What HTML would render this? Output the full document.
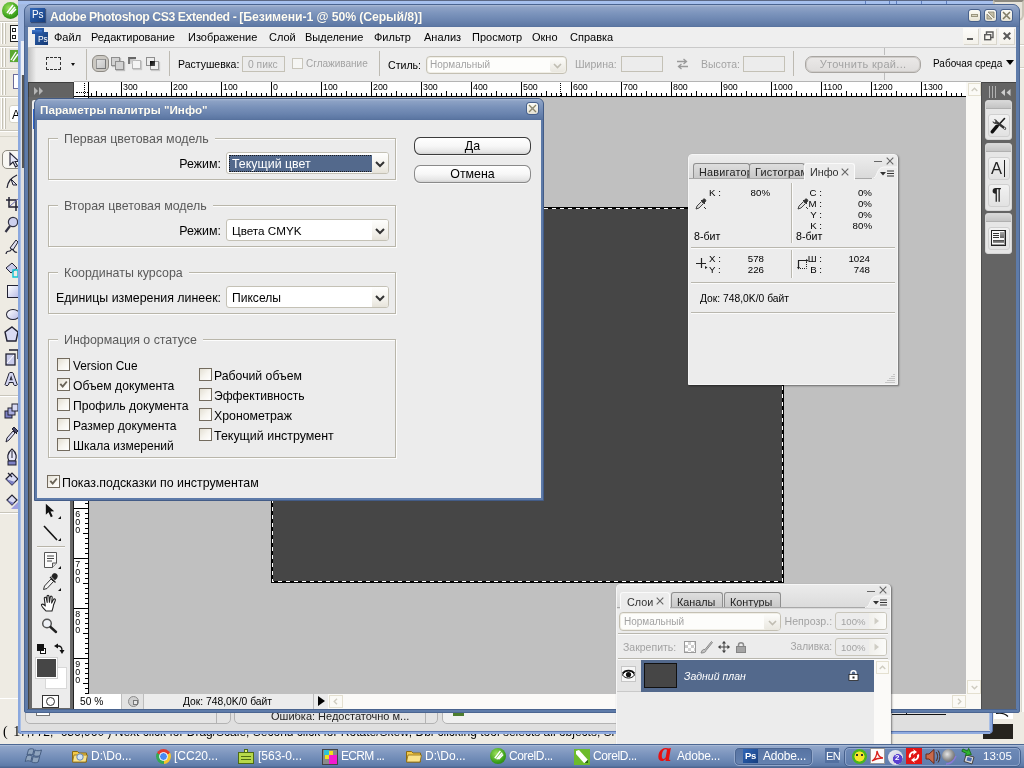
<!DOCTYPE html>
<html lang="ru">
<head>
<meta charset="utf-8">
<title>Adobe Photoshop CS3 Extended</title>
<style>
*{box-sizing:border-box;margin:0;padding:0}
html,body{width:1024px;height:768px;overflow:hidden}
body{position:relative;will-change:transform;background:#eeebe3;font-family:"Liberation Sans","DejaVu Sans",sans-serif;font-size:11px;color:#000;line-height:1}
.a{position:absolute}
.t{position:absolute;white-space:nowrap;line-height:14px;height:14px}
.g{color:#a3a3a3}
svg{position:absolute;overflow:visible}
/* fonts */
.f10{font-size:10.3px}
.f11{font-size:11px}
.fd{font-size:12.4px}
/* window */
#w0{left:17px;top:0;width:976px;height:734px;background:#dfdfdf;border:1px solid #5572ad;border-radius:5px 5px 4px 4px;box-shadow:inset 0 0 0 2px #8ba8de,inset 0 0 0 3px #a9bfe6}
#ps{left:24px;top:4px;width:996px;height:709px;background:#5e7ba9;border:1px solid #4b6591;border-radius:7px 7px 2px 2px}
#tb{left:25px;top:5px;width:994px;height:22px;border-radius:6px 6px 0 0;background:linear-gradient(#aebdd7 0,#90a4c7 2px,#7d95bd 8px,#6c86b1 15px,#5d78a4 21px,#556f9b 22px)}
#title{left:50px;top:10px;font-weight:bold;font-size:12.300px;color:#fffdf3;letter-spacing:-.29px;text-shadow:0 0 1px rgba(60,80,120,.5)}
.wb{position:absolute;top:10px;width:11px;height:11px;border-radius:2.500px;background:linear-gradient(#fdfcf6,#e6e2d3);box-shadow:0 0 0 1px #48618c}
.mb{position:absolute;top:28px;width:15px;height:16px;background:linear-gradient(#fdfcfa,#f3f1ea);box-shadow:1px 1px 0 #d9d6cc}
#menubar{left:28px;top:27px;width:988px;height:20px;background:#efefef}
.mi{position:absolute;top:30px;font-size:11px;line-height:14px;white-space:nowrap}
#opt{left:28px;top:47px;width:988px;height:35px;background:#ededed;border-top:1px solid #c9c9c9}
.sep{position:absolute;top:51px;width:1px;height:25px;background:#bdbab2}
.inp{position:absolute;top:56px;height:16px;border:1px solid #c4c1b6;background:#ececec}
/* work area */
#work{left:28px;top:82px;width:988px;height:627px;background:#c0c0c0}
#tooldock{left:28px;top:82px;width:46px;height:627px;background:#686868;border-left:1px solid #444;border-right:1px solid #222}
#toolpanel{left:32px;top:100px;width:38px;height:608px;background:#ececec;border-radius:2px 2px 0 0}
#doc{left:272px;top:208px;width:512px;height:374px;background:#464646}
#rdock{left:981px;top:82px;width:35px;height:627px;background:#646464;border-left:1px solid #4e4e4e}
#vscroll{left:966px;top:82px;width:15px;height:612px;background:#faf9f5}
#status{left:74px;top:694px;width:907px;height:15px;background:#ececec}
.pg{position:absolute;left:985px;width:27px;background:#e6e6e6;border-radius:3px;border:1px solid #d6d6d6}
.pgh{position:absolute;left:0;top:0;width:25px;height:8px;background:linear-gradient(#d8d8d8,#c4c4c4);border-radius:2px 2px 0 0;border-bottom:1px solid #b0b0b0}
.pib{position:absolute;left:1.500px;width:22px;height:23px;border:1px solid #d0d0d0;border-radius:3px;background:linear-gradient(#f2f2f2,#e2e2e2)}
</style>
</head>
<body>
<!-- background window (CorelDRAW) bits -->

<div class="a" style="left:993px;top:0;width:31px;height:21px;background:#e6e3da;border:2px solid #c9c5b8;border-top-color:#8c897f;border-radius:0 0 6px 0"></div>
<div class="a" style="left:1020px;top:21px;width:4px;height:724px;background:#eeebe3"></div>
<div class="a" style="left:1020px;top:44px;width:4px;height:1px;background:#d4d0c4;box-shadow:0 23px 0 #d4d0c4,0 1px 0 #fff,0 24px 0 #fff"></div>
<div class="a" style="left:1021px;top:130px;width:3px;height:582px;background:#fbfaf7;border-left:1px solid #d9d6cc"></div>
<!-- CorelDRAW status text (clipped by windows above) -->
<div class="a" style="left:20px;top:725px;width:600px;height:16px;overflow:hidden"><div class="t" style="left:0;top:0;font-size:12px;line-height:14px">7,772; -636,960 ) Next click for Drag/Scale; Second click for Rotate/Skew; Dbl-clicking tool selects all objects; Shift+click multi</div></div>
<!-- right of behind-window: white scrap and black block -->
<div class="a" style="left:994px;top:712px;width:19px;height:7px;background:#fff"></div>
<svg style="left:996px;top:712px" width="14" height="6" viewBox="0 0 14 6"><path d="M0 1.500 C5 .5 9 1.500 12 4.500" fill="none" stroke="#111" stroke-width="1.200"/></svg>
<div class="a" style="left:983px;top:724px;width:30px;height:15px;background:#26231e"></div>
<div class="a" id="w0"></div>
<div class="a" style="left:18px;top:1px;width:975px;height:40px;background:linear-gradient(#b4c8ec,#a1b8e0 4px,#a3b9e0)"></div>
<div class="a" style="left:21px;top:41px;width:4px;height:34px;background:#eceff6"></div><div class="a" style="left:22px;top:75px;width:3px;height:93px;background:#555"></div>
<div class="a" style="left:17px;top:0;width:976px;height:1px;background:#5c6884"></div><div class="a" style="left:18px;top:1px;width:974px;height:3px;background:#a6c0ee"></div><div class="a" style="left:865px;top:1px;width:1px;height:3px;background:#5f7fc0"></div><div class="a" style="left:889px;top:1px;width:1px;height:3px;background:#5f7fc0"></div><div class="a" style="left:896px;top:1px;width:1px;height:3px;background:#5f7fc0"></div><div class="a" style="left:921px;top:1px;width:1px;height:3px;background:#5f7fc0"></div><div class="a" style="left:946px;top:1px;width:1px;height:3px;background:#5f7fc0"></div>
<!-- bottom strip of the window behind -->
<div class="a" style="left:21px;top:730px;width:969px;height:4px;background:linear-gradient(#dcdcdc 0,#dcdcdc 1px,#5f7ab3 1px,#5f7ab3 2px,#91acdf 2px,#91acdf 4px)"></div>
<div class="a" style="left:123px;top:713px;width:6px;height:1px;background:#111"></div><div class="a" style="left:149px;top:713px;width:1px;height:1px;background:#111"></div>
<div class="a" style="left:25px;top:700px;width:206px;height:24px;border:1px solid #b3b3b3;border-radius:0 0 5px 5px;background:#e4e4e4"></div>
<div class="a" style="left:216px;top:712px;width:1px;height:12px;background:#b3b3b3"></div>
<div class="a" style="left:234px;top:700px;width:204px;height:24px;border:1px solid #b3b3b3;border-radius:0 0 5px 5px;background:#e4e4e4"></div>
<div class="a" style="left:442px;top:700px;width:200px;height:24px;border:1px solid #b3b3b3;border-radius:0 0 0 5px;background:#f0f0f0"></div>
<div class="a" style="left:36px;top:708px;width:14px;height:8px;border:1px solid #777;background:#fff"></div>
<div class="t" style="left:271px;top:709px;font-size:11px;line-height:14px;color:#222">Ошибка: Недостаточно м...</div>
<div class="a" style="left:425px;top:712px;width:1px;height:12px;background:#b3b3b3"></div>
<div class="a" style="left:453px;top:708px;width:11px;height:8px;background:#4d7d2f"></div>
<div class="a" style="left:892px;top:714px;width:54px;height:1px;background:#111"></div>
<div class="a" style="left:906px;top:712px;width:1px;height:3px;background:#111"></div>
<!-- left strip: CorelDRAW toolbox peeking out -->
<div class="a" id="lstrip" style="left:0;top:0;width:18px;height:744px;background:#eeebe3;overflow:hidden">
 <div class="a" style="left:0;top:0;width:18px;height:130px;background:#ebe8df"></div>
 <div class="a" style="left:0;top:21px;width:18px;height:1px;background:#c8c5ba;box-shadow:0 1px 0 #fff"></div>
 <div class="a" style="left:0;top:46px;width:18px;height:1px;background:#c8c5ba;box-shadow:0 1px 0 #fff"></div>
 <div class="a" style="left:0;top:68px;width:18px;height:1px;background:#c8c5ba;box-shadow:0 1px 0 #fff"></div>
 <div class="a" style="left:0;top:96px;width:18px;height:1px;background:#c8c5ba;box-shadow:0 1px 0 #fff"></div>
 <div class="a" style="left:0;top:130px;width:18px;height:1px;background:#c8c5ba;box-shadow:0 1px 0 #fff"></div>
 <div class="a" style="left:0;top:136px;width:18px;height:1px;background:#d8d5ca"></div>
 <div class="a" style="left:1px;top:23px;width:1px;height:21px;background:#fff;box-shadow:1px 0 0 #c5c2b6,3px 0 0 #fff,4px 0 0 #c5c2b6"></div><div class="a" style="left:1px;top:48px;width:1px;height:19px;background:#fff;box-shadow:1px 0 0 #c5c2b6,3px 0 0 #fff,4px 0 0 #c5c2b6"></div><div class="a" style="left:1px;top:70px;width:1px;height:25px;background:#fff;box-shadow:1px 0 0 #c5c2b6,3px 0 0 #fff,4px 0 0 #c5c2b6"></div><div class="a" style="left:1px;top:98px;width:1px;height:31px;background:#fff;box-shadow:1px 0 0 #c5c2b6,3px 0 0 #fff,4px 0 0 #c5c2b6"></div>
 <!-- corel balloon -->
 <div class="a" style="left:2px;top:2px;width:17px;height:17px;border-radius:50%;background:radial-gradient(circle at 40% 35%,#9be05a,#3aa01a 60%,#1d6d0c)"></div>
 <svg style="left:4px;top:3px" width="14" height="14" viewBox="0 0 14 14"><path d="M3 10 L9 2 M5 11 L11 4 M7 11 L12 6" stroke="#fff" stroke-width="1.6" fill="none"/></svg>
 <!-- icons row 2..5 -->
 <div class="a" style="left:10px;top:25px;width:10px;height:17px;border:1px solid #222;background:#fff"></div>
 <div class="a" style="left:12px;top:28px;width:4px;height:4px;border:1px solid #222"></div>
 <div class="a" style="left:12px;top:35px;width:4px;height:4px;border:1px solid #222"></div>
 <div class="a" style="left:9px;top:49px;width:10px;height:14px;background:#5aa832;border:1px solid #ddd"></div>
 <svg style="left:10px;top:50px" width="8" height="12" viewBox="0 0 8 12"><path d="M1 10 L6 2 M3 11 L8 4" stroke="#fff" stroke-width="1.4"/></svg>
 <div class="a" style="left:13px;top:74px;width:6px;height:15px;border:1px solid #6b6b9a;background:#fff"></div>
 <div class="a" style="left:9px;top:105px;width:12px;height:18px;border:1px solid #d5d2c6;border-radius:3px;background:#fff"></div>
 <div class="t" style="left:12px;top:108px;font-size:12px">A</div>
 <!-- selected pick tool -->
 <div class="a" style="left:2px;top:150px;width:20px;height:19px;border:1px solid #8d8a80;border-radius:5px;background:#f8f7f3"></div>
 <svg style="left:9px;top:152px" width="11" height="16" viewBox="0 0 11 16"><path d="M1 1 L1 13 L4 10 L6.500 15 L8.500 14 L6 9.500 L10 9.500 Z" stroke="#223" stroke-width="1.100" fill="#e8e9f8"/></svg>
 <!-- shape tool -->
 <svg style="left:5px;top:173px" width="14" height="17" viewBox="0 0 14 17"><path d="M2 15 C3 8 6 5 12 2" stroke="#223" stroke-width="1.2" fill="none"/><path d="M6 6 L12 12 L8 12 Z" fill="#dde" stroke="#223" stroke-width="1"/></svg>
 <!-- crop -->
 <svg style="left:6px;top:196px" width="13" height="16" viewBox="0 0 13 16"><path d="M3 1 V11 H13 M0 4 H10 V15" stroke="#223" stroke-width="1.5" fill="none"/><path d="M4 10 L12 3" stroke="#6a6ab0" stroke-width="1"/></svg>
 <!-- zoom -->
 <svg style="left:4px;top:216px" width="15" height="18" viewBox="0 0 15 18"><circle cx="9" cy="6" r="4.6" fill="#cdd0ee" stroke="#334" stroke-width="1.2"/><path d="M6 10 L1.5 16" stroke="#334" stroke-width="2.2"/></svg>
 <!-- freehand -->
 <svg style="left:5px;top:239px" width="14" height="18" viewBox="0 0 14 18"><path d="M5 9 L11 1 L13 3 L8 11 Z" fill="#dde" stroke="#223" stroke-width="1"/><path d="M1 15 C2 10 4 14 6 11 S9 15 12 13" stroke="#223" stroke-width="1.2" fill="none"/></svg>
 <!-- smart fill -->
 <svg style="left:4px;top:262px" width="15" height="18" viewBox="0 0 15 18"><path d="M2 6 L8 1 L13 6 L7 11 Z" fill="#c9cbea" stroke="#223" stroke-width="1"/><path d="M9 8 h5 v7 h-5z" fill="none" stroke="#12c4d4" stroke-width="1.4"/></svg>
 <!-- rectangle -->
 <div class="a" style="left:7px;top:285px;width:13px;height:13px;border:1.5px solid #223;background:linear-gradient(135deg,#fff,#b9bce6)"></div>
 <!-- ellipse -->
 <div class="a" style="left:6px;top:309px;width:14px;height:11px;border:1.5px solid #223;border-radius:50%;background:linear-gradient(135deg,#fff,#b9bce6)"></div>
 <!-- polygon -->
 <svg style="left:4px;top:326px" width="15" height="17" viewBox="0 0 15 17"><path d="M8 1 L14 6 L12 15 L3 15 L1 6 Z" fill="#d9dbf3" stroke="#223" stroke-width="1.4"/></svg>
 <!-- basic shapes -->
 <svg style="left:5px;top:349px" width="14" height="18" viewBox="0 0 14 18"><rect x="1" y="5" width="9" height="11" fill="#c9cbea" stroke="#223" stroke-width="1.3"/><path d="M4 1 h9 v9" fill="none" stroke="#223" stroke-width="1.3"/><path d="M2 14 L9 6" stroke="#fff" stroke-width="1"/></svg>
 <!-- text tool -->
 <div class="t" style="left:5px;top:371px;font-size:17px;line-height:18px;height:18px;color:#d5d7f2;font-weight:bold;text-shadow:-1px 0 #223,1px 0 #223,0 -1px #223,0 1px #223">A</div>
 <div class="a" style="left:0;top:395px;width:18px;height:1px;background:#c8c5ba;box-shadow:0 1px 0 #fff"></div>
 <!-- blend -->
 <svg style="left:4px;top:402px" width="15" height="18" viewBox="0 0 15 18"><rect x="1" y="9" width="7" height="7" fill="#7d80c4" stroke="#223"/><rect x="4" y="6" width="7" height="7" fill="#a9acdf" stroke="#223"/><rect x="8" y="2" width="6" height="7" fill="#d9dbf3" stroke="#223"/></svg>
 <!-- eyedropper -->
 <svg style="left:4px;top:426px" width="15" height="18" viewBox="0 0 15 18"><path d="M2 16 L3 12 L9 5 L11 7 L5 14 Z" fill="#d9dbf3" stroke="#223" stroke-width="1"/><path d="M8 3 L13 8 M10 1 L14 5 L12 7 L8 3 Z" fill="#446" stroke="#223" stroke-width="1"/></svg>
 <!-- outline pen -->
 <svg style="left:5px;top:448px" width="14" height="19" viewBox="0 0 14 19"><path d="M7 1 C2 5 2 10 4 13 H10 C12 10 12 5 7 1 Z" fill="#e6e7f8" stroke="#223" stroke-width="1.2"/><path d="M7 3 V10" stroke="#223"/><rect x="3" y="13" width="8" height="4" fill="#7d80c4" stroke="#223"/></svg>
 <!-- fill -->
 <svg style="left:4px;top:470px" width="15" height="19" viewBox="0 0 15 19"><path d="M2 9 L8 3 L14 9 L8 15 Z" fill="#d9dbf3" stroke="#223" stroke-width="1.2"/><path d="M4 3 L8 7" stroke="#223" stroke-width="1.2"/><path d="M2 9 L8 15 L11 12 Z" fill="#7d80c4"/></svg>
 <!-- interactive fill -->
 <svg style="left:4px;top:493px" width="15" height="19" viewBox="0 0 15 19"><path d="M3 7 L8 2 L13 7 L8 12 Z" fill="#d9dbf3" stroke="#223" stroke-width="1.2"/><path d="M7 16 L15 8 L15 16 Z" fill="#9d9fe0"/><path d="M3 7 L8 12 L10 10 Z" fill="#7d80c4"/></svg>
 <div class="a" style="left:0;top:512px;width:18px;height:1px;background:#c8c5ba;box-shadow:0 1px 0 #fff"></div>
 <div class="a" style="left:0;top:698px;width:18px;height:1px;background:#fff"></div>
 <div class="a" style="left:0;top:699px;width:18px;height:46px;background:#efece5"></div>
</div>
<!-- cut-off text under windows -->
<div class="t" style="left:3px;top:724px;font-family:'Liberation Serif',serif;font-size:14px;line-height:16px;height:16px;letter-spacing:1px">( 1</div>
<!-- Photoshop main window -->
<div class="a" id="ps"></div>
<div class="a" id="tb"></div>
<!-- app icon -->
<div class="a" style="left:30px;top:8px;width:15px;height:14px;background:linear-gradient(135deg,#2f66b8,#173f80);box-shadow:1px 1px 1px rgba(20,40,80,.6)"></div>
<div class="t" style="left:32px;top:8px;font-size:10px;color:#fff;letter-spacing:-.2px;line-height:13px">Ps</div>
<div class="t" id="title"><span style="letter-spacing:-.44px">Adobe Photoshop CS3 Extended - </span><span style="letter-spacing:-.12px">[Безимени-1 @ 50% (Серый/8)]</span></div>
<!-- window buttons -->
<div class="wb" style="left:969px"></div>
<div class="a" style="left:971px;top:14px;width:7px;height:3px;background:#d9d4bf;border:1px solid #9a957e"></div>
<div class="wb" style="left:985px"></div>
<svg style="left:986px;top:11px" width="9" height="9" viewBox="0 0 9 9"><path d="M2 1 H8 V7 Z" fill="#c4bfa8" stroke="#8a856e" stroke-width=".8"/><path d="M1 3 V8 H6 Z" fill="#c4bfa8" stroke="#8a856e" stroke-width=".8"/></svg>
<div class="wb" style="left:1001px"></div>
<svg style="left:1002px;top:11px" width="9" height="9" viewBox="0 0 9 9"><path d="M1 1 L8 8 M8 1 L1 8" stroke="#7d7860" stroke-width="1.500"/><circle cx="4.500" cy="4.500" r="1.300" fill="#8f8d80"/></svg>
<!-- menu bar -->
<div class="a" id="menubar"></div>
<div class="a" style="left:35px;top:28px;width:13px;height:17px;background:linear-gradient(135deg,#2f66b8,#143872)"></div>
<div class="a" style="left:32px;top:30px;width:10px;height:4px;background:linear-gradient(#3f78cc,#1f4f9e)"></div>
<div class="a" style="left:44px;top:28px;width:0;height:0;border-left:4px solid #e8eef8;border-top:4px solid #efefef"></div>
<div class="t" style="left:38px;top:34px;font-size:8.500px;color:#fff;line-height:10px;height:10px;letter-spacing:-.2px">Ps</div>
<div class="mi" style="left:54px">Файл</div>
<div class="mi" style="left:91px">Редактирование</div>
<div class="mi" style="left:188px">Изображение</div>
<div class="mi" style="left:269px">Слой</div>
<div class="mi" style="left:305px">Выделение</div>
<div class="mi" style="left:374px">Фильтр</div>
<div class="mi" style="left:424px">Анализ</div>
<div class="mi" style="left:472px">Просмотр</div>
<div class="mi" style="left:532px">Окно</div>
<div class="mi" style="left:570px">Справка</div>
<div class="mb" style="left:963px"></div><div class="a" style="left:967px;top:38px;width:6px;height:2px;background:#5a5a5a"></div>
<div class="mb" style="left:981px"></div>
<svg style="left:984px;top:31px" width="10" height="10" viewBox="0 0 10 10"><path d="M2.5 3 V1 H9 V6.5 H7" fill="none" stroke="#5a5a5a" stroke-width="1.4"/><rect x="0.7" y="3.7" width="6" height="5" fill="none" stroke="#5a5a5a" stroke-width="1.4"/></svg>
<div class="mb" style="left:999px"></div>
<svg style="left:1003px;top:32px" width="8" height="8" viewBox="0 0 8 8"><path d="M.7 .7 L7.3 7.3 M7.3 .7 L.7 7.3" stroke="#5a5a5a" stroke-width="2"/></svg>
<!-- options bar -->
<div class="a" id="opt"></div>
<div class="a" style="left:74px;top:81px;width:907px;height:1px;background:#b4b4b4"></div>
<div class="a" style="left:28px;top:48px;width:8px;height:34px;background:linear-gradient(to right,#bfbfbf,#d6d6d6 50%,#ececec)"></div>
<div class="a" style="left:46px;top:57px;width:15px;height:13px;border:1px dashed #333"></div>
<div class="a" style="left:71px;top:63px;width:0;height:0;border:2.500px solid transparent;border-top:3px solid #111;border-bottom:0"></div>
<div class="sep" style="left:86px;top:49px;height:31px"></div>
<!-- selection mode icons -->
<div class="a" style="left:92px;top:55px;width:17px;height:17px;border-radius:6px;background:#cbc8c2;border:1px solid #8d8a84"></div>
<div class="a" style="left:96px;top:59px;width:10px;height:10px;border:1px solid #777;border-top-color:#999;border-left-color:#999;background:linear-gradient(135deg,#e4e4e4,#c4c4c4)"></div>
<div class="a" style="left:111px;top:57px;width:9px;height:9px;border:1px solid #8e8e8e;background:#d2d2d2;box-shadow:1px 1px 1px rgba(0,0,0,.2)"></div>
<div class="a" style="left:115px;top:61px;width:9px;height:9px;border:1px solid #8e8e8e;background:#d2d2d2;box-shadow:1px 1px 1px rgba(0,0,0,.2)"></div>
<div class="a" style="left:132px;top:60px;width:9px;height:9px;border:1px solid #b5b5b5;background:#f4f4f4;box-shadow:1px 1px 1px rgba(0,0,0,.15)"></div>
<div class="a" style="left:128px;top:57px;width:8px;height:7px;border-top:2px solid #666;border-left:2px solid #777;background:linear-gradient(135deg,#bbb,#eee);clip-path:polygon(0 0,100% 0,100% 45%,55% 45%,55% 100%,0 100%)"></div>
<div class="a" style="left:146px;top:57px;width:9px;height:9px;border:1px solid #8e8e8e;background:#ececec"></div>
<div class="a" style="left:150px;top:61px;width:9px;height:9px;border:1px solid #9a9a9a;background:#f2f2f2;box-shadow:1px 1px 1px rgba(0,0,0,.15)"></div>
<div class="a" style="left:150px;top:61px;width:5px;height:5px;background:linear-gradient(135deg,#000,#555)"></div>
<div class="sep" style="left:169px"></div>
<div class="t f10" style="left:178px;top:57px;font-size:10.5px">Растушевка:</div>
<div class="inp" style="left:242px;width:43px"></div>
<div class="t f10 g" style="left:248px;top:58px">0 пикс</div>
<div class="a" style="left:292px;top:58px;width:11px;height:11px;border:1px solid #c9c6bb;background:#f6f6f4"></div>
<div class="t f10 g" style="left:306px;top:57px;font-size:10px">Сглаживание</div>
<div class="sep" style="left:379px"></div>
<div class="t f10" style="left:388px;top:58px;font-size:10.6px">Стиль:</div>
<div class="a" style="left:426px;top:56px;width:141px;height:18px;border:1px solid #c4c0b3;border-radius:4px;background:#fdfdfb;box-shadow:inset 0 0 0 1px #f0eee6"></div>
<div class="a" style="left:550px;top:58px;width:15px;height:14px;background:linear-gradient(#fcfcfa,#e9e7df);border-radius:2px"></div>
<svg style="left:553px;top:63px" width="9" height="6" viewBox="0 0 9 6"><path d="M1 1 L4.5 4.5 L8 1" fill="none" stroke="#c0bdb2" stroke-width="1.6"/></svg>
<div class="t f10 g" style="left:430px;top:58px;font-size:10px">Нормальный</div>
<div class="t f10 g" style="left:575px;top:57px;font-size:10.5px">Ширина:</div>
<div class="inp" style="left:621px;width:42px"></div>
<svg style="left:676px;top:58px" width="13" height="12" viewBox="0 0 13 12"><path d="M1 3.5 H10 M7.5 1 L10.5 3.5 L7.5 6 M12 8.5 H3 M5.5 6 L2.5 8.5 L5.5 11" fill="none" stroke="#9a9a9a" stroke-width="1.3"/></svg>
<div class="t f10 g" style="left:701px;top:57px;font-size:10.5px">Высота:</div>
<div class="inp" style="left:743px;width:42px"></div>
<div class="sep" style="left:793px"></div>
<div class="a" style="left:805px;top:56px;width:116px;height:17px;border:1px solid #a9a6a2;border-radius:7px;background:linear-gradient(#ebe9e8,#dedcdb);box-shadow:inset 0 0 0 1px #cfccc9"></div>
<div class="t g" style="left:805px;top:57px;width:116px;text-align:center;font-size:11px;letter-spacing:.3px">Уточнить край...</div>
<div class="a" style="left:884px;top:48px;width:1px;height:7px;background:#bdbdbd"></div>
<div class="a" style="left:884px;top:73px;width:1px;height:7px;background:#bdbdbd"></div>
<div class="t f10" style="left:933px;top:57px;font-size:10px">Рабочая среда</div>
<div class="a" style="left:1006px;top:60px;width:0;height:0;border:4.500px solid transparent;border-top:5.500px solid #000;border-bottom:0"></div>
<!-- work area -->
<div class="a" id="work"></div>
<div class="a" id="tooldock"></div>
<div class="a" style="left:28px;top:82px;width:46px;height:15px;background:#636363;border:1px solid #3e3e3e;border-bottom:0"></div>
<svg style="left:34px;top:87px" width="10" height="8" viewBox="0 0 10 8"><path d="M0 0 L4 4 L0 8 Z M5 0 L9 4 L5 8 Z" fill="#b5b5b5"/></svg>
<div class="a" id="toolpanel"></div>
<div class="a" style="left:33px;top:109px;width:2px;height:20px;background:#2a62cc"></div>
<!-- ruler corner -->
<div class="a" style="left:74px;top:82px;width:15px;height:15px;background:#fff;border-right:1px solid #000;border-bottom:1px solid #000"></div>
<div class="a" style="left:76px;top:92px;width:12px;height:1px;border-top:1px dotted #000"></div>
<div class="a" style="left:84px;top:83px;width:1px;height:13px;border-left:1px dotted #000"></div>
<div class="a" style="left:89px;top:82px;width:877px;height:15px;background:#fff;border-bottom:1px solid #000"></div>
<svg style="left:89px;top:82px" width="877" height="15" viewBox="0 0 877 15"><path d="M2.5 11V15M7.5 9V15M12.5 11V15M17.5 11V15M22.5 11V15M27.5 11V15M32.5 0V15M37.5 11V15M42.5 11V15M47.5 11V15M52.5 11V15M57.5 9V15M62.5 11V15M67.5 11V15M72.5 11V15M77.5 11V15M82.5 0V15M87.5 11V15M92.5 11V15M97.5 11V15M102.5 11V15M107.5 9V15M112.5 11V15M117.5 11V15M122.5 11V15M127.5 11V15M132.5 0V15M137.5 11V15M142.5 11V15M147.5 11V15M152.5 11V15M157.5 9V15M162.5 11V15M167.5 11V15M172.5 11V15M177.5 11V15M182.5 0V15M187.5 11V15M192.5 11V15M197.5 11V15M202.5 11V15M207.5 9V15M212.5 11V15M217.5 11V15M222.5 11V15M227.5 11V15M232.5 0V15M237.5 11V15M242.5 11V15M247.5 11V15M252.5 11V15M257.5 9V15M262.5 11V15M267.5 11V15M272.5 11V15M277.5 11V15M282.5 0V15M287.5 11V15M292.5 11V15M297.5 11V15M302.5 11V15M307.5 9V15M312.5 11V15M317.5 11V15M322.5 11V15M327.5 11V15M332.5 0V15M337.5 11V15M342.5 11V15M347.5 11V15M352.5 11V15M357.5 9V15M362.5 11V15M367.5 11V15M372.5 11V15M377.5 11V15M382.5 0V15M387.5 11V15M392.5 11V15M397.5 11V15M402.5 11V15M407.5 9V15M412.5 11V15M417.5 11V15M422.5 11V15M427.5 11V15M432.5 0V15M437.5 11V15M442.5 11V15M447.5 11V15M452.5 11V15M457.5 9V15M462.5 11V15M467.5 11V15M472.5 11V15M477.5 11V15M482.5 0V15M487.5 11V15M492.5 11V15M497.5 11V15M502.5 11V15M507.5 9V15M512.5 11V15M517.5 11V15M522.5 11V15M527.5 11V15M532.5 0V15M537.5 11V15M542.5 11V15M547.5 11V15M552.5 11V15M557.5 9V15M562.5 11V15M567.5 11V15M572.5 11V15M577.5 11V15M582.5 0V15M587.5 11V15M592.5 11V15M597.5 11V15M602.5 11V15M607.5 9V15M612.5 11V15M617.5 11V15M622.5 11V15M627.5 11V15M632.5 0V15M637.5 11V15M642.5 11V15M647.5 11V15M652.5 11V15M657.5 9V15M662.5 11V15M667.5 11V15M672.5 11V15M677.5 11V15M682.5 0V15M687.5 11V15M692.5 11V15M697.5 11V15M702.5 11V15M707.5 9V15M712.5 11V15M717.5 11V15M722.5 11V15M727.5 11V15M732.5 0V15M737.5 11V15M742.5 11V15M747.5 11V15M752.5 11V15M757.5 9V15M762.5 11V15M767.5 11V15M772.5 11V15M777.5 11V15M782.5 0V15M787.5 11V15M792.5 11V15M797.5 11V15M802.5 11V15M807.5 9V15M812.5 11V15M817.5 11V15M822.5 11V15M827.5 11V15M832.5 0V15M837.5 11V15M842.5 11V15M847.5 11V15M852.5 11V15M857.5 9V15M862.5 11V15M867.5 11V15M872.5 11V15" stroke="#000" stroke-width="1" fill="none" shape-rendering="crispEdges"/>
<g font-family="Liberation Sans, sans-serif" font-size="8.9" fill="#000"><text x="34" y="7.6">300</text><text x="84" y="7.6">200</text><text x="134" y="7.6">100</text><text x="184" y="7.6">0</text><text x="234" y="7.6">100</text><text x="284" y="7.6">200</text><text x="334" y="7.6">300</text><text x="384" y="7.6">400</text><text x="434" y="7.6">500</text><text x="484" y="7.6">600</text><text x="534" y="7.6">700</text><text x="584" y="7.6">800</text><text x="634" y="7.6">900</text><text x="684" y="7.6">1000</text><text x="734" y="7.6">1100</text><text x="784" y="7.6">1200</text><text x="834" y="7.6">1300</text></g>
<path d="M471.5 1V15" stroke="#000" stroke-width="1" stroke-dasharray="1 1" shape-rendering="crispEdges"/></svg>
<div class="a" style="left:74px;top:97px;width:15px;height:597px;background:#fff;border-right:1px solid #000"></div>
<svg style="left:74px;top:97px" width="15" height="597" viewBox="0 0 15 597"><path d="M11 1.5H15M11 6.5H15M0 11.5H15M11 16.5H15M11 21.5H15M11 26.5H15M11 31.5H15M9 36.5H15M11 41.5H15M11 46.5H15M11 51.5H15M11 56.5H15M0 61.5H15M11 66.5H15M11 71.5H15M11 76.5H15M11 81.5H15M9 86.5H15M11 91.5H15M11 96.5H15M11 101.5H15M11 106.5H15M0 111.5H15M11 116.5H15M11 121.5H15M11 126.5H15M11 131.5H15M9 136.5H15M11 141.5H15M11 146.5H15M11 151.5H15M11 156.5H15M0 161.5H15M11 166.5H15M11 171.5H15M11 176.5H15M11 181.5H15M9 186.5H15M11 191.5H15M11 196.5H15M11 201.5H15M11 206.5H15M0 211.5H15M11 216.5H15M11 221.5H15M11 226.5H15M11 231.5H15M9 236.5H15M11 241.5H15M11 246.5H15M11 251.5H15M11 256.5H15M0 261.5H15M11 266.5H15M11 271.5H15M11 276.5H15M11 281.5H15M9 286.5H15M11 291.5H15M11 296.5H15M11 301.5H15M11 306.5H15M0 311.5H15M11 316.5H15M11 321.5H15M11 326.5H15M11 331.5H15M9 336.5H15M11 341.5H15M11 346.5H15M11 351.5H15M11 356.5H15M0 361.5H15M11 366.5H15M11 371.5H15M11 376.5H15M11 381.5H15M9 386.5H15M11 391.5H15M11 396.5H15M11 401.5H15M11 406.5H15M0 411.5H15M11 416.5H15M11 421.5H15M11 426.5H15M11 431.5H15M9 436.5H15M11 441.5H15M11 446.5H15M11 451.5H15M11 456.5H15M0 461.5H15M11 466.5H15M11 471.5H15M11 476.5H15M11 481.5H15M9 486.5H15M11 491.5H15M11 496.5H15M11 501.5H15M11 506.5H15M0 511.5H15M11 516.5H15M11 521.5H15M11 526.5H15M11 531.5H15M9 536.5H15M11 541.5H15M11 546.5H15M11 551.5H15M11 556.5H15M0 561.5H15M11 566.5H15M11 571.5H15M11 576.5H15M11 581.5H15M9 586.5H15M11 591.5H15M11 596.5H15" stroke="#000" stroke-width="1" fill="none" shape-rendering="crispEdges"/>
<g font-family="Liberation Sans, sans-serif" font-size="8.9" fill="#000"><text x="1.3" y="19.5">2</text><text x="1.3" y="27.7">0</text><text x="1.3" y="35.9">0</text><text x="1.3" y="69.5">1</text><text x="1.3" y="77.7">0</text><text x="1.3" y="85.9">0</text><text x="1.3" y="119.5">0</text><text x="1.3" y="169.5">1</text><text x="1.3" y="177.7">0</text><text x="1.3" y="185.9">0</text><text x="1.3" y="219.5">2</text><text x="1.3" y="227.7">0</text><text x="1.3" y="235.9">0</text><text x="1.3" y="269.5">3</text><text x="1.3" y="277.7">0</text><text x="1.3" y="285.9">0</text><text x="1.3" y="319.5">4</text><text x="1.3" y="327.7">0</text><text x="1.3" y="335.9">0</text><text x="1.3" y="369.5">5</text><text x="1.3" y="377.7">0</text><text x="1.3" y="385.9">0</text><text x="1.3" y="419.5">6</text><text x="1.3" y="427.7">0</text><text x="1.3" y="435.9">0</text><text x="1.3" y="469.5">7</text><text x="1.3" y="477.7">0</text><text x="1.3" y="485.9">0</text><text x="1.3" y="519.5">8</text><text x="1.3" y="527.7">0</text><text x="1.3" y="535.9">0</text><text x="1.3" y="569.5">9</text><text x="1.3" y="577.7">0</text><text x="1.3" y="585.9">0</text></g></svg>
<!-- document with marching ants -->
<div class="a" id="doc"></div>
<svg style="left:271px;top:207px" width="513" height="376" viewBox="0 0 513 376" shape-rendering="crispEdges"><rect x=".5" y=".5" width="512" height="375" fill="none" stroke="#000" stroke-width="1"/><rect x="1.500" y="1.500" width="510" height="373" fill="none" stroke="#000" stroke-width="1"/><rect x="1.500" y="1.500" width="510" height="373" fill="none" stroke="#fff" stroke-width="1" stroke-dasharray="4 4" stroke-dashoffset=".5"/></svg>
<!-- scrollbars -->
<div class="a" id="vscroll"></div>
<div class="a" style="left:968px;top:83px;width:13px;height:13px;border:1px solid #e4e0d0;background:#fbfaf6"></div>
<svg style="left:971px;top:87px" width="7" height="5" viewBox="0 0 7 5"><path d="M.7 4 L3.5 1.2 L6.3 4" fill="none" stroke="#cfccc0" stroke-width="1.4"/></svg>
<div class="a" style="left:967px;top:680px;width:14px;height:14px;border:1px solid #e4e0d0;background:#fbfaf6"></div>
<svg style="left:971px;top:685px" width="7" height="5" viewBox="0 0 7 5"><path d="M.7 1 L3.5 3.8 L6.3 1" fill="none" stroke="#cfccc0" stroke-width="1.4"/></svg>
<!-- status bar -->
<div class="a" style="left:27px;top:709px;width:990px;height:1px;background:#4a648f"></div>
<div class="a" id="status"></div>
<div class="a" style="left:74px;top:694px;width:47px;height:15px;background:#fff"></div>
<div class="t f10" style="left:80px;top:695px;font-size:10.2px">50 %</div>
<div class="a" style="left:121px;top:694px;width:23px;height:15px;background:#e2e2e2;border-left:1px solid #bdbdbd;border-right:1px solid #bdbdbd"></div>
<div class="a" style="left:128px;top:696px;width:11px;height:11px;border-radius:50%;border:1.5px solid #8c8c8c;background:#cfcfcf"></div>
<div class="a" style="left:133px;top:700px;width:5px;height:5px;border:1px solid #777;background:#e6e6e6"></div>
<div class="t f10" style="left:183px;top:695px">Док: 748,0K/0 байт</div>
<div class="a" style="left:313px;top:694px;width:1px;height:15px;background:#bdbdbd"></div>
<div class="a" style="left:318px;top:696px;width:0;height:0;border:5px solid transparent;border-left:7px solid #000;border-right:0"></div>
<div class="a" style="left:328px;top:694px;width:638px;height:15px;background:#fbfaf8"></div>
<div class="a" style="left:329px;top:695px;width:14px;height:13px;border:1px solid #e4e0d0;background:#fbfaf6"></div>
<svg style="left:333px;top:698px" width="5" height="7" viewBox="0 0 5 7"><path d="M4 .7 L1.2 3.5 L4 6.3" fill="none" stroke="#cfccc0" stroke-width="1.4"/></svg>
<div class="a" style="left:952px;top:695px;width:14px;height:13px;border:1px solid #e4e0d0;background:#fbfaf6"></div>
<svg style="left:957px;top:698px" width="5" height="7" viewBox="0 0 5 7"><path d="M1 .7 L3.8 3.5 L1 6.3" fill="none" stroke="#cfccc0" stroke-width="1.4"/></svg>
<div class="a" style="left:966px;top:694px;width:15px;height:15px;background:#faf9f5"></div>
<!-- right dock -->
<div class="a" id="rdock"></div>
<div class="a" style="left:981px;top:82px;width:35px;height:1px;background:#454545"></div>
<div class="a" style="left:989px;top:86px;width:1px;height:12px;background:#b0b0b0;box-shadow:3px 0 0 #b0b0b0,6px 0 0 #b0b0b0"></div>
<svg style="left:1001px;top:88.500px" width="10" height="7" viewBox="0 0 10 7"><path d="M4 0 L0 3.500 L4 7 Z M9.500 0 L5.500 3.500 L9.500 7 Z" fill="#cdcdcd"/></svg>
<div class="pg" style="top:100px;height:40px"><div class="pgh"></div><div class="pib" style="top:13px"></div></div>
<svg style="left:990px;top:116px" width="18" height="18" viewBox="0 0 18 18"><path d="M3 15 L14.500 2.500" stroke="#1a1a1a" stroke-width="1.600" stroke-linecap="round"/><path d="M2.200 15.800 L7 10.200" stroke="#111" stroke-width="3.400" stroke-linecap="round"/><path d="M7 6.500 L15 12.500" stroke="#333" stroke-width="2.400" stroke-linecap="round"/><path d="M7.500 6.800 C7.800 4.500 6 2.800 3.800 3.200 L5.600 5 L4.600 6.400 L2.600 5 C2.400 7 4.500 8.600 6.600 7.800 Z" fill="#444"/><circle cx="14.600" cy="12.200" r=".8" fill="#eee"/></svg>
<div class="pg" style="top:143px;height:68px"><div class="pgh"></div><div class="pib" style="top:13px"></div><div class="pib" style="top:40px"></div></div>
<div class="t" style="left:991px;top:159px;font-size:16.500px;line-height:18px;height:18px;color:#222">A</div>
<div class="a" style="left:1004px;top:160px;width:1px;height:17px;background:#222"></div>
<div class="t" style="left:992px;top:186px;font-size:17px;line-height:18px;height:18px;color:#222;font-weight:bold">¶</div>
<div class="pg" style="top:213px;height:41px"><div class="pgh"></div><div class="pib" style="top:13px"></div></div>
<div class="a" style="left:991px;top:230px;width:15px;height:16px;border:1px solid #222;background:#fafafa;box-shadow:inset -1px -1px 0 #999"></div>
<div class="a" style="left:993px;top:233px;width:6px;height:1px;background:#333;box-shadow:0 2px 0 #333,0 4px 0 #333"></div>
<div class="a" style="left:1000px;top:232px;width:4px;height:6px;background:linear-gradient(#aaa,#666)"></div>
<div class="a" style="left:993px;top:240px;width:11px;height:3px;background:linear-gradient(#444,#999)"></div>
<!-- toolbox icons visible below dialog -->
<svg style="left:44.500px;top:502.500px" width="10" height="15" viewBox="0 0 12 18"><path d="M1 1 L1 14 L4.2 11 L7 17 L9.3 16 L6.6 10.2 L11 10 Z" fill="#111"/></svg>
<div class="a" style="left:58px;top:516px;width:0;height:0;border-left:3px solid transparent;border-bottom:3px solid #111"></div>
<svg style="left:43px;top:525px" width="16" height="18" viewBox="0 0 16 18"><path d="M1 1 L14 15" stroke="#111" stroke-width="1.6"/></svg>
<div class="a" style="left:58px;top:538px;width:0;height:0;border-left:3px solid transparent;border-bottom:3px solid #111"></div>
<div class="a" style="left:37px;top:546px;width:28px;height:1px;background:#b8b4a8;box-shadow:0 1px 0 #f8f8f8"></div>
<svg style="left:43px;top:551px" width="16" height="18" viewBox="0 0 16 18"><path d="M1.5 1.500 H13.500 V12 L9.500 16.500 H1.500 Z" fill="#fbfbfb" stroke="#555" stroke-width="1"/><path d="M9.5 16.5 V12 H13.5" fill="#ddd" stroke="#555" stroke-width="1"/><path d="M4 5 H11 M4 7.500 H11 M4 10 H9" stroke="#444" stroke-width="1"/></svg>
<div class="a" style="left:58px;top:566px;width:0;height:0;border-left:3px solid transparent;border-bottom:3px solid #111"></div>
<svg style="left:42px;top:572px" width="17" height="19" viewBox="0 0 17 19"><path d="M1.500 17.500 L2.500 14 L9 7 L11.500 9.500 L5 16.500 Z" fill="#f2f2f2" stroke="#333" stroke-width="1"/><path d="M8 5 L13.500 10.500 M10.500 3.500 C12 0 16.500 2.500 14.500 6 L13 7.500 L10 4.500 Z" fill="#222" stroke="#222" stroke-width="1.2"/></svg>
<div class="a" style="left:58px;top:588px;width:0;height:0;border-left:3px solid transparent;border-bottom:3px solid #111"></div>
<svg style="left:40px;top:594px" width="19" height="18" viewBox="0 0 19 18"><path d="M6 17 C4 14.500 1 12.500 1.500 10.500 C3 9.500 4.300 10.800 5.300 12 L4.300 4.500 C4.100 3 6 2.700 6.300 4.200 L7.200 8.500 L7 2.500 C7 1 9 1 9 2.500 L9.400 8.300 L10.300 3 C10.600 1.600 12.500 2 12.200 3.500 L11.600 9 L13.500 5.500 C14.200 4.300 15.900 5.200 15.300 6.500 L13.500 11 C13.300 13.500 12.500 15 12 17 Z" fill="#fff" stroke="#222" stroke-width="1.100" stroke-linejoin="round"/></svg>
<svg style="left:41px;top:618px" width="17" height="16" viewBox="0 0 17 16"><circle cx="6" cy="5.500" r="4.300" fill="#eef1f6" stroke="#555" stroke-width="1.500"/><path d="M9.500 9 L15 14" stroke="#222" stroke-width="2.400" stroke-linecap="round"/></svg>
<!-- default colours / swap -->
<div class="a" style="left:40px;top:648px;width:6px;height:6px;background:#fff;border:1px solid #111"></div>
<div class="a" style="left:37px;top:644px;width:7px;height:7px;background:#111"></div>
<svg style="left:54px;top:643px" width="11" height="11" viewBox="0 0 11 11"><path d="M2.500 3.500 C6 2 8.500 4 8 8" fill="none" stroke="#111" stroke-width="1.400"/><path d="M0 3 L4 .5 L4 5.500 Z" fill="#111"/><path d="M5.500 7 L10.500 7 L8 11 Z" fill="#111"/></svg>
<!-- fg/bg swatches -->
<div class="a" style="left:45px;top:667px;width:22px;height:22px;background:#fff;border:1px solid #d8d8d8"></div>
<div class="a" style="left:36px;top:658px;width:21px;height:20px;background:#464646;border:1px solid #fff;box-shadow:0 0 0 1px #cfcfcf"></div>
<!-- quick mask -->
<div class="a" style="left:42px;top:695px;width:17px;height:13px;border:1px solid #333;background:#fff"></div>
<div class="a" style="left:46px;top:697px;width:9px;height:9px;border-radius:50%;border:1px solid #333"></div>
<!-- ===== Dialog: Info palette options ===== -->
<style>
#dlg{left:34px;top:98px;width:510px;height:403px;background:#5d7aa8;border:1px solid #435c87;border-radius:6px 6px 0 0}
#dlgt{left:35px;top:99px;width:508px;height:21px;border-radius:5px 5px 0 0;background:linear-gradient(#aab9d4 0,#8da2c5 2px,#7a92ba 8px,#6983ae 15px,#5b76a2 20px,#546e9a 21px)}
#dlgb{left:37px;top:120px;width:504px;height:378px;background:#ececec}
.fs{position:absolute;left:48px;width:348px;border:1px solid #b9b6aa;box-shadow:inset 1px 1px 0 #fdfdfd,1px 1px 0 #fdfdfd}
.lg{position:absolute;left:58px;background:#ececec;padding:0 6px;color:#5a5a5a;font-size:12.4px;line-height:15px;height:15px;white-space:nowrap}
.dl{position:absolute;font-size:12.4px;line-height:15px;height:15px;white-space:nowrap}
.sel{position:absolute;left:226px;width:163px;height:22px;border:1px solid #c4c1b5;border-radius:3px;background:#fff}
.selb{position:absolute;left:372px;width:16px;height:20px;border-radius:0 2px 2px 0;background:linear-gradient(#fefefd,#f1efe9 70%,#e6e3da)}
.cb{position:absolute;width:13px;height:13px;border:1px solid #736b5e;background:linear-gradient(135deg,#e3dfd3,#f6f4ee 50%,#fff)}
.btn{position:absolute;left:414px;width:117px;height:18px;border:1px solid #8a8a8a;border-radius:6px/7px;background:linear-gradient(#ffffff,#f7f7f7 50%,#e6e6e6 85%,#d2d2d2);font-size:12.4px;line-height:17px;text-align:center;box-shadow:0 1px 0 #f8f8f8}
</style>
<div class="a" id="dlg"></div>
<div class="a" id="dlgt"></div>
<div class="a" id="dlgb"></div>
<div class="t" style="left:40px;top:103px;font-weight:bold;font-size:11.7px;color:#fffdf3;text-shadow:0 0 1px rgba(60,80,120,.5)">Параметры палитры "Инфо"</div>
<div class="a" style="left:527px;top:103px;width:11px;height:11px;border-radius:3px;background:linear-gradient(#fdfcf6,#e6e2d3);box-shadow:0 0 0 1px #48618c"></div>
<svg style="left:528px;top:104px" width="9" height="9" viewBox="0 0 9 9"><path d="M1 1 L8 8 M8 1 L1 8" stroke="#8a8468" stroke-width="1.300"/><circle cx="4.500" cy="4.500" r="1.300" fill="#9a988c"/></svg>
<!-- group 1 -->
<div class="fs" style="top:138px;height:42px"></div>
<div class="lg" style="top:132px">Первая цветовая модель</div>
<div class="dl" style="left:100px;top:157px;width:121px;text-align:right">Режим:</div>
<div class="sel" style="top:152px"></div>
<div class="a" style="left:229px;top:155px;width:144px;height:17px;background:#53698c;border:1px dotted #1a1a1a;outline:0"></div>
<div class="selb" style="top:153px"></div>
<svg style="left:375px;top:161px" width="10" height="7" viewBox="0 0 10 7"><path d="M1 1 L5 5 L9 1" fill="none" stroke="#333" stroke-width="2"/></svg>
<div class="dl" style="left:232px;top:157px;color:#fff">Текущий цвет</div>
<!-- group 2 -->
<div class="fs" style="top:205px;height:42px"></div>
<div class="lg" style="top:199px">Вторая цветовая модель</div>
<div class="dl" style="left:100px;top:224px;width:121px;text-align:right">Режим:</div>
<div class="sel" style="top:219px"></div>
<div class="selb" style="top:220px"></div>
<svg style="left:375px;top:228px" width="10" height="7" viewBox="0 0 10 7"><path d="M1 1 L5 5 L9 1" fill="none" stroke="#333" stroke-width="2"/></svg>
<div class="dl" style="left:232px;top:223px;font-size:11.7px">Цвета CMYK</div>
<!-- group 3 -->
<div class="fs" style="top:272px;height:42px"></div>
<div class="lg" style="top:266px">Координаты курсора</div>
<div class="dl" style="left:40px;top:291px;width:181px;text-align:right">Единицы измерения линеек:</div>
<div class="sel" style="top:286px"></div>
<div class="selb" style="top:287px"></div>
<svg style="left:375px;top:295px" width="10" height="7" viewBox="0 0 10 7"><path d="M1 1 L5 5 L9 1" fill="none" stroke="#333" stroke-width="2"/></svg>
<div class="dl" style="left:232px;top:291px;font-size:12.1px">Пикселы</div>
<!-- group 4 -->
<div class="fs" style="top:339px;height:119px"></div>
<div class="lg" style="top:333px">Информация о статусе</div>
<div class="cb" style="left:57px;top:358px"></div><div class="dl" style="left:73px;top:359px;font-size:11.85px">Version Cue</div>
<div class="cb" style="left:57px;top:378px"></div><div class="dl" style="left:73px;top:379px;font-size:12.17px">Объем документа</div>
<svg style="left:59px;top:380px" width="9" height="9" viewBox="0 0 9 9"><path d="M1.300 3.800 L3.700 6.600 L7.800 1.500" fill="none" stroke="#6a6458" stroke-width="1.900"/></svg>
<div class="cb" style="left:57px;top:398px"></div><div class="dl" style="left:73px;top:399px;font-size:12.21px">Профиль документа</div>
<div class="cb" style="left:57px;top:418px"></div><div class="dl" style="left:73px;top:419px;font-size:12.05px">Размер документа</div>
<div class="cb" style="left:57px;top:438px"></div><div class="dl" style="left:73px;top:439px;font-size:12.0px">Шкала измерений</div>
<div class="cb" style="left:199px;top:368px"></div><div class="dl" style="left:214px;top:369px;font-size:12.26px">Рабочий объем</div>
<div class="cb" style="left:199px;top:388px"></div><div class="dl" style="left:214px;top:389px;font-size:12.07px">Эффективность</div>
<div class="cb" style="left:199px;top:408px"></div><div class="dl" style="left:214px;top:409px;font-size:12.31px">Хронометраж</div>
<div class="cb" style="left:199px;top:428px"></div><div class="dl" style="left:214px;top:429px;font-size:12.45px">Текущий инструмент</div>
<!-- tool tips -->
<div class="cb" style="left:47px;top:475px"></div><div class="dl" style="left:62px;top:476px;font-size:12.4px">Показ.подсказки по инструментам</div>
<svg style="left:49px;top:477px" width="9" height="9" viewBox="0 0 9 9"><path d="M1.300 3.800 L3.700 6.600 L7.800 1.500" fill="none" stroke="#6a6458" stroke-width="1.900"/></svg>
<!-- buttons -->
<div class="btn" style="top:137px;border-color:#3c3c3c">Да</div>
<div class="btn" style="top:165px">Отмена</div>
<!-- ===== Info panel ===== -->
<style>
.pnl{position:absolute;background:#ececec;border:1px solid #f6f6f6;border-radius:4px 4px 0 0;box-shadow:1px 1px 2px rgba(0,0,0,.45)}
.ph{position:absolute;left:0;top:0;right:0;background:linear-gradient(#e9e9e9,#dcdcdc);border-radius:3px 3px 0 0}
.tab{position:absolute;height:15px;border:1px solid #8f8f8f;border-bottom:0;border-radius:3px 3px 0 0;background:linear-gradient(#dedede,#c9c9c9);font-size:10.8px;line-height:17px;white-space:nowrap;overflow:hidden;padding-left:4px;color:#222}
.tab.on{background:#ececec;border-color:#fafafa;height:17px;color:#333;line-height:17px}
.it{position:absolute;font-size:9.7px;line-height:11px;height:11px;white-space:nowrap}
.hr{position:absolute;height:1px;background:#b9b7ae;box-shadow:0 1px 0 #fbfbfb}
.vr{position:absolute;width:1px;background:#b9b7ae;box-shadow:1px 0 0 #fbfbfb}
</style>
<div class="pnl" style="left:688px;top:154px;width:210px;height:231px"></div>
<div class="a" style="left:689px;top:155px;width:208px;height:24px;background:linear-gradient(#ededed,#d9d9d9);border-radius:3px 3px 0 0"></div>
<div class="a" style="left:689px;top:178px;width:208px;height:1px;background:#a8a8a8"></div>
<div class="tab" style="left:693px;top:163px;width:57px;letter-spacing:.25px;padding-left:5px">Навигатор</div>
<div class="tab" style="left:749px;top:163px;width:56px;letter-spacing:.25px;padding-left:5px">Гистограмма</div>
<div class="tab on" style="left:804px;top:163px;width:51px;padding-left:5px">Инфо</div>
<svg style="left:841px;top:168px" width="8" height="8" viewBox="0 0 8 8"><path d="M.7 .7 L7.3 7.3 M7.3 .7 L.7 7.3" stroke="#666" stroke-width="1.1"/></svg>
<div class="a" style="left:874px;top:161px;width:8px;height:1px;background:#666"></div>
<svg style="left:886px;top:157px" width="8" height="8" viewBox="0 0 8 8"><path d="M.7 .7 L7.3 7.3 M7.3 .7 L.7 7.3" stroke="#666" stroke-width="1.1"/></svg>
<svg style="left:872px;top:165px" width="25" height="14" viewBox="0 0 25 14"><path d="M0 14 C6 14 4 2 12 2 H25 V14 Z" fill="#ececec"/><path d="M0 13.500 C6 13.500 4 2 12 2 H25" fill="none" stroke="#fafafa" stroke-width="1"/><path d="M8 7 L14 7 L11 10.500 Z" fill="#333"/><path d="M15 6 H22 M15 8.500 H22 M15 11 H22" stroke="#333" stroke-width="1"/></svg>
<!-- left column -->
<div class="it" style="left:709px;top:187px">K :</div><div class="it" style="left:730px;top:187px;width:40px;text-align:right">80%</div>
<svg style="left:695px;top:198px" width="12" height="12" viewBox="0 0 12 12"><path d="M1 11 L2 8 L6.500 3.500 L8.500 5.500 L4 10 Z" fill="#ddd" stroke="#333" stroke-width=".9"/><path d="M6 2 L10 6 M8 1.500 C9.500 0 11.500 2 10.500 3.500 L9 5 L7 3 Z" fill="#333" stroke="#333" stroke-width="1"/><path d="M9 9 l2 2" stroke="#333"/></svg>
<div class="it" style="left:694px;top:231px;font-size:10.6px">8-бит</div>
<div class="vr" style="left:791px;top:183px;height:60px"></div>
<!-- right column -->
<svg style="left:797px;top:198px" width="12" height="12" viewBox="0 0 12 12"><path d="M1 11 L2 8 L6.500 3.500 L8.500 5.500 L4 10 Z" fill="#ddd" stroke="#333" stroke-width=".9"/><path d="M6 2 L10 6 M8 1.500 C9.500 0 11.500 2 10.500 3.500 L9 5 L7 3 Z" fill="#333" stroke="#333" stroke-width="1"/><path d="M9 9 l2 2" stroke="#333"/></svg>
<div class="it" style="left:800px;top:187px;width:22px;text-align:right">C :</div><div class="it" style="left:832px;top:187px;width:40px;text-align:right">0%</div>
<div class="it" style="left:800px;top:198px;width:22px;text-align:right">M :</div><div class="it" style="left:832px;top:198px;width:40px;text-align:right">0%</div>
<div class="it" style="left:800px;top:209px;width:22px;text-align:right">Y :</div><div class="it" style="left:832px;top:209px;width:40px;text-align:right">0%</div>
<div class="it" style="left:800px;top:220px;width:22px;text-align:right">K :</div><div class="it" style="left:832px;top:220px;width:40px;text-align:right">80%</div>
<div class="it" style="left:796px;top:231px;font-size:10.6px">8-бит</div>
<div class="hr" style="left:691px;top:247px;width:204px"></div>
<!-- XY / WH -->
<svg style="left:696px;top:258px" width="12" height="12" viewBox="0 0 12 12"><path d="M5.500 0 V10 M0 5.500 H10" stroke="#222" stroke-width="1.2"/><path d="M9 8 l2.500 1.500 l-2.500 1.500 z" fill="#222"/></svg>
<div class="it" style="left:709px;top:253px">X :</div><div class="it" style="left:724px;top:253px;width:40px;text-align:right">578</div>
<div class="it" style="left:709px;top:264px">Y :</div><div class="it" style="left:724px;top:264px;width:40px;text-align:right">226</div>
<div class="vr" style="left:791px;top:250px;height:28px"></div>
<svg style="left:797px;top:258px" width="12" height="12" viewBox="0 0 12 12"><path d="M1.500 10 V2.500 H10" fill="none" stroke="#222" stroke-width="1.2"/><path d="M3 10.500 H9.500 V4" fill="none" stroke="#222" stroke-width="1" stroke-dasharray="1 1"/><path d="M9 1 l2.500 1.500 l-2.500 1.500z M0 9 l1.500 2.500 l1.500 -2.500z" fill="#222"/></svg>
<div class="it" style="left:800px;top:253px;width:22px;text-align:right">Ш :</div><div class="it" style="left:830px;top:253px;width:40px;text-align:right">1024</div>
<div class="it" style="left:800px;top:264px;width:22px;text-align:right">B :</div><div class="it" style="left:830px;top:264px;width:40px;text-align:right">748</div>
<div class="hr" style="left:691px;top:282px;width:204px"></div>
<div class="it" style="left:700px;top:293px;font-size:10.3px">Док: 748,0K/0 байт</div>
<div class="hr" style="left:691px;top:312px;width:204px"></div>
<svg style="left:886px;top:374px" width="9" height="9" viewBox="0 0 9 9"><path d="M8 0v1M6 2v1M8 2v1M4 4v1M6 4v1M8 4v1M2 6v1M4 6v1M6 6v1M8 6v1M0 8v1M2 8v1M4 8v1M6 8v1M8 8v1" stroke="#a0a0a0" stroke-width="1"/></svg>

<!-- ===== Layers panel ===== -->
<div class="pnl" style="left:616px;top:584px;width:275px;height:170px"></div>
<div class="a" style="left:617px;top:585px;width:273px;height:24px;background:linear-gradient(#ebebeb,#dadada);border-radius:3px 3px 0 0"></div>
<div class="a" style="left:617px;top:607px;width:273px;height:1px;background:#a8a8a8"></div>
<div class="tab on" style="left:620px;top:592px;width:50px;padding-left:6px;height:17px;line-height:18px">Слои</div>
<svg style="left:656px;top:597px" width="8" height="8" viewBox="0 0 8 8"><path d="M.7 .7 L7.3 7.3 M7.3 .7 L.7 7.3" stroke="#666" stroke-width="1.1"/></svg>
<div class="tab" style="left:671px;top:592px;width:52px;padding-left:5px;line-height:18px">Каналы</div>
<div class="tab" style="left:724px;top:592px;width:57px;padding-left:5px;line-height:18px">Контуры</div>
<div class="a" style="left:867px;top:591px;width:8px;height:1px;background:#666"></div>
<svg style="left:879px;top:586px" width="8" height="8" viewBox="0 0 8 8"><path d="M.7 .7 L7.3 7.3 M7.3 .7 L.7 7.3" stroke="#666" stroke-width="1.1"/></svg>
<svg style="left:865px;top:594px" width="25" height="14" viewBox="0 0 25 14"><path d="M0 14 C6 14 4 2 12 2 H25 V14 Z" fill="#ececec"/><path d="M0 13.500 C6 13.500 4 2 12 2 H25" fill="none" stroke="#fafafa" stroke-width="1"/><path d="M8 7 L14 7 L11 10.500 Z" fill="#333"/><path d="M15 6 H22 M15 8.500 H22 M15 11 H22" stroke="#333" stroke-width="1"/></svg>
<!-- blend / opacity row -->
<div class="a" style="left:619px;top:612px;width:162px;height:19px;border:1px solid #c4c0b3;border-radius:4px;background:#fdfdfb;box-shadow:inset 0 0 0 1px #f0eee6"></div>
<div class="a" style="left:764px;top:614px;width:16px;height:16px;background:linear-gradient(#fcfcfa,#e9e7df);border-radius:2px"></div>
<svg style="left:768px;top:620px" width="9" height="6" viewBox="0 0 9 6"><path d="M1 1 L4.500 4.500 L8 1" fill="none" stroke="#c0bdb2" stroke-width="1.6"/></svg>
<div class="t g" style="left:624px;top:615px;font-size:10px">Нормальный</div>
<div class="t g" style="left:784.500px;top:614px;font-size:10.600px">Непрозр.:</div>
<div class="a" style="left:835px;top:612px;width:52px;height:18px;border:1px solid #c9c6bb;border-radius:3px;background:#ececec"></div>
<div class="a" style="left:869px;top:613px;width:17px;height:16px;background:linear-gradient(to right,#f0efeb,#fbfbf9);border-radius:0 2px 2px 0"></div>
<svg style="left:874px;top:617px" width="6" height="8" viewBox="0 0 6 8"><path d="M.5 .5 L5 4 L.5 7.500 Z" fill="#cfcdc4"/></svg>
<div class="t g" style="left:841px;top:615px;font-size:9.600px">100%</div>
<div class="hr" style="left:618px;top:633px;width:270px"></div>
<!-- lock / fill row -->
<div class="t g" style="left:623px;top:640px;font-size:10.5px">Закрепить:</div>
<div class="a" style="left:684px;top:641px;width:12px;height:12px;border:1px solid #9a9a9a;background:conic-gradient(#d4d4d4 25%,#fff 0 50%,#ccc 0 75%,#fff 0) 0 0/6px 6px"></div>
<svg style="left:700px;top:640px" width="13" height="14" viewBox="0 0 13 14"><path d="M1 13 C2 10 3 9 5 9.500 L11.500 1.500 L12.500 2.500 L6 10.500 C6 12 4 13 1 13 Z" fill="#c4c4c4" stroke="#8a8a8a" stroke-width="1"/></svg>
<svg style="left:718px;top:641px" width="12" height="12" viewBox="0 0 14 14"><path d="M7 1 V13 M1 7 H13" stroke="#444" stroke-width="1.2"/><path d="M7 0 L9.500 3 H4.500Z M7 14 L9.500 11 H4.500Z M0 7 L3 4.500 V9.500Z M14 7 L11 4.500 V9.500Z" fill="#444"/></svg>
<svg style="left:735px;top:640px" width="12" height="14" viewBox="0 0 12 14"><path d="M3.500 6 V5 C3.500 2 8.500 2 8.500 5 V6" fill="none" stroke="#8c8c8c" stroke-width="1.500"/><rect x="1.500" y="6.500" width="9" height="6" fill="#a4a4a4" stroke="#858585"/></svg>
<div class="t g" style="left:790.500px;top:640px;font-size:10.100px">Заливка:</div>
<div class="a" style="left:835px;top:638px;width:52px;height:18px;border:1px solid #c9c6bb;border-radius:3px;background:#ececec"></div>
<div class="a" style="left:869px;top:639px;width:17px;height:16px;background:linear-gradient(to right,#f0efeb,#fbfbf9);border-radius:0 2px 2px 0"></div>
<svg style="left:874px;top:643px" width="6" height="8" viewBox="0 0 6 8"><path d="M.5 .5 L5 4 L.5 7.500 Z" fill="#cfcdc4"/></svg>
<div class="t g" style="left:841px;top:641px;font-size:9.600px">100%</div>
<div class="hr" style="left:618px;top:658px;width:270px"></div>
<!-- layer row -->
<div class="a" style="left:617px;top:660px;width:24px;height:32px;background:#e4e4e4;border-bottom:1px solid #c9c9c9"></div>
<div class="a" style="left:621px;top:666px;width:15px;height:16px;background:#f6f6f6;border:1px solid #c6c6c6"></div>
<svg style="left:622px;top:670px" width="13" height="9" viewBox="0 0 13 9"><path d="M.5 5 C3 -.5 10 -.5 12.500 5 C10 9 3 9 .5 5 Z" fill="#fff" stroke="#111" stroke-width="1"/><circle cx="6.500" cy="4.500" r="2.600" fill="#111"/><path d="M.5 3.500 C3 -.5 10 -.5 12.500 3.500" fill="none" stroke="#111" stroke-width="1.5"/></svg>
<div class="a" style="left:641px;top:660px;width:233px;height:32px;background:#53698c"></div>
<div class="a" style="left:644px;top:663px;width:33px;height:25px;background:#464646;border:1px solid #111"></div>
<div class="t" style="left:684px;top:669px;font-size:10.5px;font-style:italic;color:#fff">Задний план</div>
<svg style="left:848px;top:669px" width="11" height="12" viewBox="0 0 11 12"><path d="M3 5.500 V4 C3 1 8 1 8 4 V5.500" fill="none" stroke="#fff" stroke-width="1.4"/><rect x="1" y="5.500" width="9" height="6" fill="#fff" stroke="#222" stroke-width=".8"/><rect x="4.500" y="7.500" width="2" height="2" fill="#222"/></svg>
<div class="a" style="left:874px;top:660px;width:16px;height:90px;background:#fbfaf8"></div>
<div class="a" style="left:876px;top:661px;width:13px;height:13px;border:1px solid #e4e0d0;background:#fbfaf6"></div>
<svg style="left:879px;top:665px" width="7" height="5" viewBox="0 0 7 5"><path d="M.7 4 L3.500 1.200 L6.300 4" fill="none" stroke="#cfccc0" stroke-width="1.4"/></svg>
<!-- ===== Taskbar ===== -->
<style>
#task{left:0;top:744px;width:1024px;height:24px;background:linear-gradient(#4d6893 0,#4d6893 1px,#a8b9d5 1px,#a8b9d5 2px,#93a8cb 2px,#7f97bf 9px,#6b87b3 17px,#5d7aa8 22px,#4d6792 23px)}
.tk{position:absolute;top:749px;font-size:12px;line-height:15px;height:15px;color:#fff;white-space:nowrap}
</style>
<div class="a" id="task"></div>
<!-- start logo -->
<svg style="left:24px;top:748px" width="19" height="17" viewBox="0 0 19 17"><g fill="#8fa4be" stroke="#40577a" stroke-width=".9"><path d="M4.500 1.500 C6.500 .5 8.500 .5 10 1.500 L8.500 7 C7 6 5 6 3 7 Z"/><path d="M11 2 C13 3 15 3 17.500 2 L16 7.500 C14 8.500 12 8.500 9.500 7.500 Z"/><path d="M2.700 8 C4.700 7 6.700 7 8.200 8 L6.700 13.500 C5.200 12.500 3.200 12.500 1.200 13.500 Z"/><path d="M9.200 8.500 C11.200 9.500 13.200 9.500 15.700 8.500 L14.200 14 C12.200 15 10.200 15 7.700 14 Z"/></g></svg>
<!-- 1: folder -->
<svg style="left:72px;top:749px" width="16" height="14" viewBox="0 0 16 14"><path d="M.5 2.500 H5.500 L7 4 H14.500 V13 H.5 Z" fill="#f3c94a" stroke="#8a6a12" stroke-width="1"/><path d="M2 6 H15.500 L14 13 H.5 Z" fill="#fbe38a" stroke="#8a6a12" stroke-width=".8"/><circle cx="8" cy="8" r="3.200" fill="#cfe4f7" stroke="#6a86b0" stroke-width="1"/></svg>
<div class="tk" style="left:91px">D:\Do...</div>
<!-- 2: chrome -->
<div class="a" style="left:156px;top:749px;width:15px;height:15px;border-radius:50%;background:conic-gradient(from -60deg,#e33b2e 0 120deg,#f7c52b 0 240deg,#35a853 0)"></div>
<div class="a" style="left:160px;top:753px;width:7px;height:7px;border-radius:50%;background:#4a8af4;border:1.500px solid #fff;box-sizing:content-box;margin:-1.500px"></div>
<div class="tk" style="left:174px">[CC20...</div>
<!-- 3 -->
<div class="a" style="left:238px;top:752px;width:16px;height:12px;background:#b6d84a;border:1px solid #4d6b12"></div>
<div class="a" style="left:244px;top:749px;width:4px;height:4px;background:#dff07a;border:1px solid #4d6b12"></div>
<div class="a" style="left:241px;top:756px;width:10px;height:1px;background:#4d6b12;box-shadow:0 3px 0 #4d6b12"></div>
<div class="tk" style="left:258px">[563-0...</div>
<!-- 4: ECRM -->
<div class="a" style="left:322px;top:749px;width:16px;height:16px;background:#8a8a8a;border:1px solid #444"></div>
<div class="a" style="left:325px;top:751px;width:8px;height:8px;background:#f3e11a"></div>
<div class="a" style="left:329px;top:755px;width:8px;height:9px;background:#f21bd0"></div>
<div class="a" style="left:324px;top:750px;width:5px;height:5px;background:#2fc0d8"></div>
<div class="tk" style="left:341px;letter-spacing:-.7px">ECRM ...</div>
<!-- 5: folder -->
<svg style="left:406px;top:749px" width="16" height="14" viewBox="0 0 16 14"><path d="M.5 2.500 H5.500 L7 4 H14.500 V13 H.5 Z" fill="#f3c94a" stroke="#8a6a12" stroke-width="1"/><path d="M2 6 H15.500 L14 13 H.5 Z" fill="#fbe38a" stroke="#8a6a12" stroke-width=".8"/></svg>
<div class="tk" style="left:425px">D:\Do...</div>
<!-- 6: corel balloon -->
<div class="a" style="left:490px;top:748px;width:16px;height:16px;border-radius:50%;background:radial-gradient(circle at 40% 35%,#9be05a,#3aa01a 60%,#1d6d0c)"></div>
<svg style="left:492px;top:749px" width="13" height="13" viewBox="0 0 14 14"><path d="M3 10 L9 2 M5 11 L11 4 M7 11 L12 6" stroke="#fff" stroke-width="1.600" fill="none"/></svg>
<div class="tk" style="left:509px;letter-spacing:-.4px">CorelD...</div>
<!-- 7: corel pencil -->
<div class="a" style="left:574px;top:749px;width:16px;height:16px;background:#6cbb2c"></div>
<svg style="left:575px;top:750px" width="14" height="14" viewBox="0 0 14 14"><path d="M1 1 L4 0 L13 10 L12 13 L9 13 L1 4 Z" fill="#fff"/><path d="M9.500 13 L13 13 L13 9.500 Z" fill="#2c6a10"/></svg>
<div class="tk" style="left:593px;letter-spacing:-.4px">CorelD...</div>
<!-- 8: acrobat a -->
<div class="t" style="left:658px;top:742px;font-family:'Liberation Serif',serif;font-style:italic;font-weight:bold;font-size:27px;line-height:20px;height:20px;color:#e81010">a</div>
<div class="tk" style="left:677px;letter-spacing:-.2px">Adobe...</div>
<!-- 9: active Photoshop -->
<div class="a" style="left:734px;top:747px;width:79px;height:19px;border-radius:5px;background:linear-gradient(#5773a2,#5f7cab 60%,#6884b1);border:1px solid #93a8cb;box-shadow:inset 0 0 0 1px #4b6591"></div>
<div class="a" style="left:743px;top:749px;width:15px;height:14px;background:linear-gradient(135deg,#2f66b8,#173f80)"></div>
<div class="t" style="left:745px;top:749px;font-size:9.500px;font-weight:bold;color:#fff;letter-spacing:-.3px;line-height:13px">Ps</div>
<div class="tk" style="left:763px;letter-spacing:-.2px">Adobe...</div>
<!-- language -->
<div class="a" style="left:825px;top:748px;width:14px;height:15px;background:#5370a0"></div>
<div class="tk" style="left:826px;font-size:11px;letter-spacing:-.5px">EN</div>
<!-- tray -->
<div class="a" style="left:844px;top:747px;width:177px;height:20px;border-radius:5px;background:linear-gradient(#6f8bb8,#5f7cab);border:1px solid #46608d;box-shadow:inset 0 0 0 1px rgba(170,188,220,.6)"></div>
<div class="a" style="left:852px;top:749px;width:15px;height:15px;border-radius:50%;background:radial-gradient(circle,#f6e62a 45%,#49b51f 50%)"></div>
<div class="a" style="left:856px;top:754px;width:2px;height:2px;background:#333;box-shadow:5px 0 0 #333"></div>
<div class="a" style="left:870px;top:748px;width:15px;height:16px;background:#fbfbfb;border:1px solid #999"></div>
<svg style="left:871px;top:750px" width="13" height="13" viewBox="0 0 13 13"><path d="M1 11 C4 9 6 5 6 1 C7 5 9 8 12 8 C8 8 4 9 1 11 Z" fill="none" stroke="#d9201a" stroke-width="1.300"/></svg>
<div class="a" style="left:888px;top:750px;width:15px;height:15px;border-radius:50%;background:radial-gradient(circle at 65% 60%,#5a3fd0 35%,#d9d9e6 38%,#f4f4fa)"></div>
<div class="t" style="left:895px;top:753px;font-size:8px;line-height:9px;height:9px;color:#fff;font-weight:bold">2</div>
<div class="a" style="left:906px;top:748px;width:16px;height:16px;background:#e21616"></div>
<svg style="left:907px;top:749px" width="14" height="14" viewBox="0 0 14 14"><path d="M2 9 C1 5 4 2 7 2 L6 0 L10 3 L6 6 L6.500 4 C4.500 4 3.500 6 4 8 Z M12 5 C13 9 10 12 7 12 L8 14 L4 11 L8 8 L7.500 10 C9.500 10 10.500 8 10 6 Z" fill="#fff"/></svg>
<svg style="left:925px;top:748px" width="15" height="17" viewBox="0 0 15 17"><path d="M1 6 H4 L9 1.500 V15.500 L4 11 H1 Z" fill="#c96a4a" stroke="#6a2a1a" stroke-width="1"/><path d="M11 4 C13 6 13 11 11 13 M13 2.500 C15.500 6 15.500 11 13 14.500" fill="none" stroke="#4a2a1a" stroke-width="1"/></svg>
<div class="a" style="left:942px;top:749px;width:13px;height:13px;border-radius:50%;background:radial-gradient(circle at 40% 40%,#e6e6e6,#8a8a8a 55%,#555)"></div>
<svg style="left:946px;top:756px" width="11" height="9" viewBox="0 0 11 9"><path d="M0 8 C4 8 8 5 10 0" stroke="#8a7ad8" stroke-width="1.500" fill="none"/></svg>
<svg style="left:960px;top:748px" width="16" height="17" viewBox="0 0 16 17"><path d="M6 7 L14 9 L12 16 L4 13.500 Z" fill="#d8d8d8" stroke="#444" stroke-width="1"/><path d="M7.500 9 L12 10 L11 13.500 L6.500 12.500 Z" fill="#4a6ab0"/><path d="M2 3 H7 V0 L12 4.500 L7 8 V5.500 H2 Z" fill="#2fb52f" stroke="#1a6a1a" stroke-width=".8" transform="rotate(25 7 4)"/></svg>
<div class="tk" style="left:983px;font-size:11.5px">13:05</div>
</body>
</html>
